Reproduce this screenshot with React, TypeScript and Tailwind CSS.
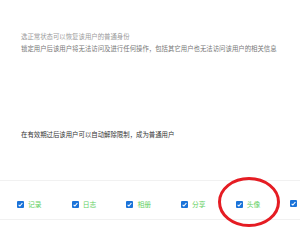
import React from 'react';

const items = ['记录', '日志', '相册', '分享', '头像', ''];

const CheckBox = () => (
  <svg width="7" height="7" viewBox="0 0 7 7" className="shrink-0">
    <rect x="0" y="0" width="7" height="7" rx="1" fill="#1a73d9" />
    <path d="M1.6 3.8 L2.9 5 L5.4 2" stroke="#fff" strokeWidth="1.1" fill="none" />
  </svg>
);

const App = () => {
  return (
    <div
      className="relative w-[300px] h-[250px] overflow-hidden bg-white"
      style={{ fontFamily: '"Noto Sans CJK SC", "Noto Sans", sans-serif' }}
    >
      <div className="pl-[21px] pt-[31px] text-[6.4px] leading-[12px]">
        <p className="text-[#9a9a9a] whitespace-nowrap">选正常状态可以恢复该用户的普通身份</p>
        <p className="text-[#777] whitespace-nowrap">
          锁定用户后该用户将无法访问及进行任何操作，包括其它用户也无法访问该用户的相关信息
        </p>
        <p className="mt-[74px] text-[#333] whitespace-nowrap">在有效期过后该用户可以自动解除限制，成为普通用户</p>
      </div>

      <div className="mt-[39px] border-t border-b border-[#f1f1f1] h-[40px] flex items-start pt-[19px] pl-[17px]">
        {items.map((item, i) => (
          <div key={i} className="w-[54.7px] shrink-0 flex items-center gap-[4px]">
            <CheckBox />
            {item && <span className="text-[6.8px] leading-[8px] text-[#5fcf5f] whitespace-nowrap">{item}</span>}
          </div>
        ))}
      </div>

      <svg className="absolute left-[217px] top-[176px]" width="64" height="52" viewBox="0 0 64 52">
        <ellipse cx="32" cy="26" rx="29.5" ry="23.5" fill="none" stroke="#e51c23" strokeWidth="3" />
      </svg>
    </div>
  );
};

export default App;
